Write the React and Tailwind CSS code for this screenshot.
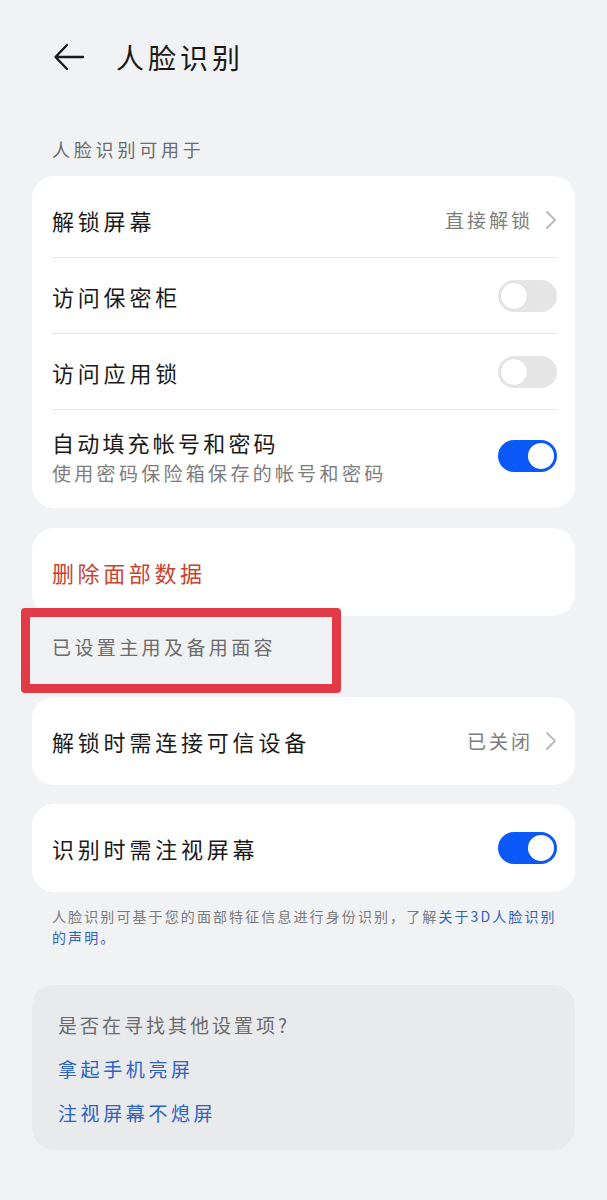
const font = { fontFamily: '"Noto Sans CJK SC", "Noto Sans", sans-serif' };

function Chevron() {
  return (
    <svg width="12" height="20" viewBox="0 0 12 20" className="ml-[12px] shrink-0">
      <path d="M2 2 L10 10 L2 18" fill="none" stroke="#b9b9b9" strokeWidth="1.8" strokeLinecap="round" strokeLinejoin="round" />
    </svg>
  );
}

function Toggle({ on }) {
  return (
    <div
      className={`flex h-[32px] w-[59px] shrink-0 items-center rounded-full px-[3px] ${
        on ? "justify-end bg-[#0a59f7]" : "justify-start bg-[#e5e5e5]"
      }`}
    >
      <div className="h-[26px] w-[26px] rounded-full bg-white shadow-[0_0_1px_rgba(0,0,0,0.15)]" />
    </div>
  );
}

function Row({ label, value, toggle, last }) {
  return (
    <div className={`flex h-[76px] items-center justify-between ${last ? "" : "border-b border-[#e6e6e6]"}`}>
      <span className="text-[22px] leading-[28px] tracking-[3.8px] text-[#1a1a1a]">{label}</span>
      {value !== undefined && (
        <div className="flex items-center">
          <span className="text-[19px] leading-[24px] tracking-[3px] text-[#7d7d7d]">{value}</span>
          <Chevron />
        </div>
      )}
      {toggle !== undefined && <Toggle on={toggle} />}
    </div>
  );
}

export default function App() {
  return (
    <div style={font} className="min-h-[1200px] w-full bg-[#f1f2f4]">
      <header className="flex h-[114px] items-center pl-[53px]">
        <svg width="32" height="28" viewBox="0 0 32 28">
          <path d="M30 14 H3 M14 2 L2.5 14 L14 26" fill="none" stroke="#1a1a1a" strokeWidth="2.4" strokeLinecap="round" strokeLinejoin="round" />
        </svg>
        <h1 className="ml-[31px] text-[28px] font-normal leading-[36px] tracking-[4px] text-[#1a1a1a]">人脸识别</h1>
      </header>

      <div className="px-[52px] pb-[16px] pt-[24px] text-[18px] leading-[22px] tracking-[3.8px] text-[#6b6b6b]">
        人脸识别可用于
      </div>

      <section className="mx-[32px] rounded-[22px] bg-white py-[6px] pl-[20px] pr-[18px]">
        <Row label="解锁屏幕" value="直接解锁" />
        <Row label="访问保密柜" toggle={false} />
        <Row label="访问应用锁" toggle={false} />
        <div className="flex h-[92px] items-center justify-between">
          <div className="flex flex-col">
            <span className="text-[22px] leading-[30px] tracking-[3.2px] text-[#1a1a1a]">自动填充帐号和密码</span>
            <span className="mt-[4px] text-[19px] leading-[24px] tracking-[3.3px] text-[#7d7d7d]">
              使用密码保险箱保存的帐号和密码
            </span>
          </div>
          <Toggle on />
        </div>
      </section>

      <section className="mx-[32px] mt-[20px] flex h-[88px] items-center rounded-[22px] bg-white px-[20px]">
        <span className="text-[22px] leading-[28px] tracking-[3.6px] text-[#c8432f]">删除面部数据</span>
      </section>

      <div className="relative px-[52px] pb-[39px] pt-[20px] text-[19px] leading-[22px] tracking-[3.4px] text-[#6b6b6b]">
        已设置主用及备用面容
        <div className="absolute left-[21px] top-[-8px] h-[85px] w-[320px] rounded-[4px] border-[9px] border-[#e23a47]" />
      </div>

      <section className="mx-[32px] flex h-[88px] items-center justify-between rounded-[22px] bg-white pl-[20px] pr-[18px]">
        <span className="text-[22px] leading-[28px] tracking-[3.8px] text-[#1a1a1a]">解锁时需连接可信设备</span>
        <div className="flex items-center">
          <span className="text-[19px] leading-[24px] tracking-[3px] text-[#7d7d7d]">已关闭</span>
          <Chevron />
        </div>
      </section>

      <section className="mx-[32px] mt-[19px] flex h-[88px] items-center justify-between rounded-[22px] bg-white pl-[20px] pr-[18px]">
        <span className="text-[22px] leading-[28px] tracking-[3.8px] text-[#1a1a1a]">识别时需注视屏幕</span>
        <Toggle on />
      </section>

      <p className="whitespace-nowrap px-[52px] pb-[37px] pt-[14px] text-[14px] leading-[21px] tracking-[2.1px] text-[#7a7a7a]">
        人脸识别可基于您的面部特征信息进行身份识别，了解<span className="text-[#2e62c0]">关于3D人脸识别</span>
        <br />
        <span className="text-[#2e62c0]">的声明。</span>
      </p>

      <section className="mx-[32px] flex flex-col gap-[20px] rounded-[22px] bg-[#e9eaec] px-[26px] pb-[25px] pt-[28px]">
        <span className="text-[19px] leading-[24px] tracking-[3px] text-[#6b6b6b]">是否在寻找其他设置项?</span>
        <span className="text-[19px] leading-[24px] tracking-[3.6px] text-[#2e62c0]">拿起手机亮屏</span>
        <span className="text-[19px] leading-[24px] tracking-[3.6px] text-[#2e62c0]">注视屏幕不熄屏</span>
      </section>
    </div>
  );
}
